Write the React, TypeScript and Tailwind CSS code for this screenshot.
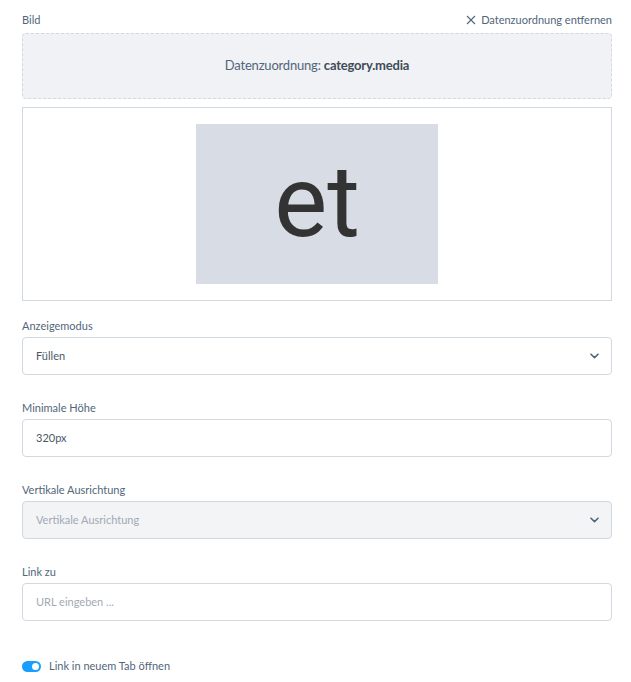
import React from "react";

function Chevron() {
  return (
    <svg width="9" height="6" viewBox="0 0 9 6" className="shrink-0">
      <path d="M1 1.2 4.5 4.6 8 1.2" fill="none" stroke="#52667a" strokeWidth="1.6" strokeLinecap="round" strokeLinejoin="round" />
    </svg>
  );
}

function Label({ children }: { children: React.ReactNode }) {
  return <div className="text-[11px] leading-[16px] text-[#52667a] mb-[3px]">{children}</div>;
}

function Field({ label, value, placeholder, select, disabled }: { label: string; value?: string; placeholder?: string; select?: boolean; disabled?: boolean }) {
  return (
    <div className="flex flex-col">
      <Label>{label}</Label>
      <div
        className={`h-[38px] rounded-[4px] border border-[#d1d9e0] flex items-center justify-between pl-[13px] pr-[12px] ${disabled ? "bg-[#f3f4f6]" : "bg-white"}`}
      >
        <span className={`text-[11px] ${value ? "text-[#4a5866]" : "text-[#a1aab3]"}`}>{value ?? placeholder}</span>
        {select && <Chevron />}
      </div>
    </div>
  );
}

export default function App() {
  return (
    <div className="bg-white w-[631px] h-[682px] overflow-hidden pl-[22px] pr-[19px] pt-[12px]" style={{ fontFamily: '"Lato", "Liberation Sans", sans-serif' }}>
      <div className="flex items-center justify-between h-[16px] mb-[5px]">
        <span className="text-[11px] text-[#52667a]">Bild</span>
        <span className="flex items-center gap-[5px] text-[11px] text-[#52667a]">
          <svg width="10" height="10" viewBox="0 0 10 10">
            <path d="M1 1 9 9M9 1 1 9" stroke="#52667a" strokeWidth="1.1" />
          </svg>
          Datenzuordnung entfernen
        </span>
      </div>
      <div className="h-[66px] rounded-[4px] border border-dashed border-[#d1d9e0] bg-[#f0f2f5] flex items-center justify-center text-[13px] tracking-[-0.2px] text-[#52667a]">
        Datenzuordnung:&nbsp;<b className="font-bold text-[#3f4c59]">category.media</b>
      </div>
      <div className="mt-[8px] h-[194px] border border-[#d1d9e0] flex items-center justify-center">
        <div className="w-[242px] h-[160px] bg-[#d8dce4] flex items-center justify-center">
          <span className="text-[100px] leading-none text-[#333333] -mt-[4px]" style={{ fontFamily: "Roboto, sans-serif" }}>
            et
          </span>
        </div>
      </div>
      <div className="mt-[17px] flex flex-col gap-[25px]">
        <Field label="Anzeigemodus" value="Füllen" select />
        <Field label="Minimale Höhe" value="320px" />
        <Field label="Vertikale Ausrichtung" placeholder="Vertikale Ausrichtung" select disabled />
        <Field label="Link zu" placeholder="URL eingeben ..." />
      </div>
      <div className="mt-[37px] flex items-center gap-[8px]">
        <div className="w-[19px] h-[11px] rounded-full bg-[#189eff] flex items-center justify-end pr-[2px]">
          <div className="w-[7px] h-[7px] rounded-full bg-white" />
        </div>
        <span className="text-[11px] text-[#52667a]">Link in neuem Tab öffnen</span>
      </div>
    </div>
  );
}
